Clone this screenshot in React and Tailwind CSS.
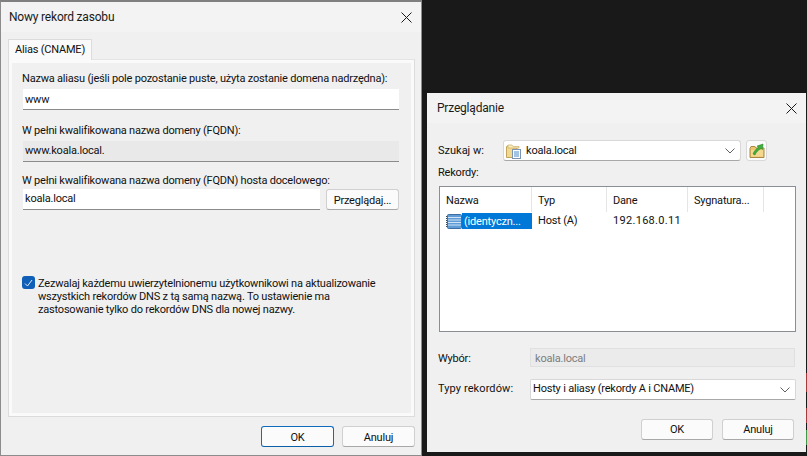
import React from 'react';

function CloseIcon() {
  return (
    <svg width="11" height="11" viewBox="0 0 11 11" className="block">
      <path d="M0.5 0.5 L10.5 10.5 M10.5 0.5 L0.5 10.5" stroke="#1a1a1a" strokeWidth="1" fill="none" />
    </svg>
  );
}

function Chevron() {
  return (
    <svg width="10" height="6" viewBox="0 0 10 6" className="block">
      <path d="M0.5 0.5 L5 5 L9.5 0.5" stroke="#606060" strokeWidth="1" fill="none" />
    </svg>
  );
}

function ZoneIcon() {
  return (
    <svg width="16" height="16" viewBox="0 0 16 16" className="block">
      <path d="M0.5 3.5 V14.5 H11 V5 H7 L5.5 3 H1 Z" fill="#f3d98f" stroke="#c2a45c" />
      <path d="M2 2 H6 L7 3.5 H13 V5 H2 Z" fill="#fbeebb" stroke="#c9ae6c" strokeWidth="0.7" />
      <rect x="6.5" y="6.5" width="8" height="9" fill="#fdfdff" stroke="#7d93b2" />
      <path d="M8 9 H13 M8 11 H13 M8 13 H13" stroke="#4b8ac6" strokeWidth="1" />
    </svg>
  );
}

function UpFolderIcon() {
  return (
    <svg width="16" height="16" viewBox="0 0 16 16" className="block">
      <path d="M1 5.5 V14.5 H15 V5 H7 L6 3.5 H2 Z" fill="#ecc66f" stroke="#a98a45" />
      <path d="M2 7 H14 V13.5 H2 Z" fill="#f4d88f" />
      <path d="M4 11 C5 8 7 6 9.5 4.5 L8 3 L14 1 L13.5 6.5 L12 5.5 C9.5 7 7 9 6 12 Z" fill="#3fae3a" stroke="#1f7f24" strokeWidth="0.5" />
    </svg>
  );
}

function RecordIcon() {
  return (
    <svg width="16" height="16" viewBox="0 0 16 16" className="block">
      <rect x="1.5" y="1.5" width="14" height="14" rx="1" fill="#5f9bd6" stroke="#3f6f9f" />
      <path d="M2 4.5 H15 M2 7 H15 M2 9.5 H15 M2 12 H15" stroke="#cfe3f5" strokeWidth="1" />
      <path d="M0.5 3 V14" stroke="#33475c" strokeWidth="1" strokeDasharray="1 1" />
    </svg>
  );
}

function Button({ label, primary, className }) {
  return (
    <button
      className={`h-[21px] w-[73px] pt-[1px] rounded-[3px] bg-[#fbfbfb] border text-[#111] leading-none ${
        primary ? 'border-[#0f6cbd] border-b-[#0b5ea8]' : 'border-[#d0d0d0] border-b-[#a8a8a8]'
      } ${className || ''}`}
    >
      {label}
    </button>
  );
}

function TitleBar({ title, pad }) {
  return (
    <div className={`h-[30px] shrink-0 bg-[#f3f3f3] flex items-center justify-between ${pad}`}>
      <span className="text-[12px] text-[#1a1a1a]">{title}</span>
      <CloseIcon />
    </div>
  );
}

function TextBox({ value, className }) {
  return (
    <div className={`h-[21px] bg-white border-b border-[#8b8b8b] pl-[2px] pt-[1px] flex items-center text-[#111] ${className}`}>
      {value}
    </div>
  );
}

function AliasDialog() {
  return (
    <div className="w-[422px] h-[456px] shrink-0 bg-[#f0f0f0] border-t-2 border-l border-r border-b border-[#8c8c8c] border-t-[#7f7f7f] flex flex-col">
      <TitleBar title="Nowy rekord zasobu" pad="pl-[8px] pr-[9px]" />
      <div className="h-[7px]" />
      <div className="h-[21px] w-[84px] ml-[7px] bg-[#fafafa] border border-b-0 border-[#dcdcdc] pl-[6px] flex items-center text-[#111] relative z-10 whitespace-nowrap">
        Alias (CNAME)
      </div>
      <div className="w-[407px] h-[358px] ml-[7px] -mt-[1px] border border-[#dcdcdc] border-t-[#e4e4e4]">
        <div className="h-full border-[3px] border-[#fafafa] pl-[10px] pr-[11px] pt-[6px] flex flex-col">
          <div className="leading-[16px] text-[#111] h-[16px] mt-[2px] whitespace-nowrap">
            Nazwa aliasu (jeśli pole pozostanie puste, użyta zostanie domena nadrzędna):
          </div>
          <TextBox value="www" className="w-[376px] ml-[1px] mt-[2px] !pt-[2px]" />
          <div className="leading-[16px] text-[#111] mt-[13px]">
            W pełni kwalifikowana nazwa domeny (FQDN):
          </div>
          <TextBox value="www.koala.local." className="w-[376px] ml-[1px] mt-[2px] !bg-[#e9e9e9]" />
          <div className="leading-[16px] text-[#111] mt-[11px]">
            W pełni kwalifikowana nazwa domeny (FQDN) hosta docelowego:
          </div>
          <div className="flex gap-[6px] ml-[1px]">
            <TextBox value="koala.local" className="w-[297px]" />
            <Button label="Przeglądaj..." />
          </div>
          <div className="flex mt-[65px]">
            <div className="w-[13px] h-[13px] mt-[1px] rounded-[3px] bg-[#0f5fb8] flex items-center justify-center shrink-0">
              <svg width="9" height="8" viewBox="0 0 9 8" className="block">
                <path d="M1 4.5 L3.5 7 L8 1" stroke="#dbe9f7" strokeWidth="1" fill="none" />
              </svg>
            </div>
            <div className="ml-[3px] pt-[2px] leading-[13px] text-[#111] whitespace-nowrap">
              <div>Zezwalaj każdemu uwierzytelnionemu użytkownikowi na aktualizowanie</div>
              <div>wszystkich rekordów DNS z tą samą nazwą. To ustawienie ma</div>
              <div>zastosowanie tylko do rekordów DNS dla nowej nazwy.</div>
            </div>
          </div>
        </div>
      </div>
      <div className="flex justify-end gap-[8px] pr-[6px] mt-[9px]">
        <Button label="OK" primary />
        <Button label="Anuluj" />
      </div>
    </div>
  );
}

const columns = [
  { name: 'Nazwa', width: 'w-[92px]' },
  { name: 'Typ', width: 'w-[75px]' },
  { name: 'Dane', width: 'w-[81px]' },
  { name: 'Sygnatura...', width: 'w-[76px]' },
];

function BrowseDialog() {
  return (
    <div className="w-[379px] h-[359px] mt-[93px] ml-[5px] shrink-0 bg-[#f0f0f0] flex flex-col text-[#111]">
      <TitleBar title="Przeglądanie" pad="pl-[10px] pr-[9px]" />
      <div className="pl-[11px] pr-[10px] flex flex-col">
        <div className="flex items-center mt-[17px]">
          <span className="w-[65px] mt-[1px] tracking-normal">Szukaj w:</span>
          <div className="w-[238px] h-[21px] pt-[1px] bg-white border border-[#d8d8d8] border-b-[#a8a8a8] rounded-[3px] flex items-center pl-[2px] pr-[5px]">
            <ZoneIcon />
            <span className="ml-[4px] flex-1">koala.local</span>
            <Chevron />
          </div>
          <div className="w-[21px] h-[21px] ml-[5px] bg-[#fbfbfb] border border-[#d8d8d8] rounded-[3px] flex items-center justify-center">
            <UpFolderIcon />
          </div>
        </div>
        <div className="mt-[4px] leading-[16px]">Rekordy:</div>
        <div className="w-[357px] h-[146px] mt-[5px] ml-[1px] bg-white border border-[#8a8f96]">
          <div className="flex h-[25px]">
            {columns.map((col) => (
              <div key={col.name} className={`${col.width} pl-[6px] pt-[3px] border-r border-[#e5e5e5] flex items-center`}>
                {col.name}
              </div>
            ))}
          </div>
          <div className="flex h-[17px] items-center">
            <div className="w-[92px] flex items-center pl-[6px]">
              <RecordIcon />
              <span className="w-[70px] h-[16px] pl-[2px] bg-[#0078d7] text-white leading-[18px] whitespace-nowrap">
                (identyczn...
              </span>
            </div>
            <div className="w-[75px] pl-[6px] pt-[2px]">Host (A)</div>
            <div className="w-[81px] pl-[6px] pt-[2px] tracking-[0.3px]">192.168.0.11</div>
          </div>
        </div>
        <div className="flex items-center mt-[16px]">
          <span className="w-[92px] mt-[3px]">Wybór:</span>
          <div className="w-[265px] h-[19px] pt-[2px] bg-[#ebebeb] border border-[#e0e0e0] pl-[4px] flex items-center text-[#7d7d7d]">
            koala.local
          </div>
        </div>
        <div className="flex items-center mt-[11px]">
          <span className="w-[92px] tracking-[0.1px]">Typy rekordów:</span>
          <div className="w-[266px] h-[21px] pt-[1px] bg-white border border-[#d8d8d8] border-b-[#a8a8a8] rounded-[2px] flex items-center justify-between pl-[2px] pr-[5px]">
            <span>Hosty i aliasy (rekordy A i CNAME)</span>
            <Chevron />
          </div>
        </div>
        <div className="flex justify-end gap-[9px] mt-[19px] pr-[2px]">
          <Button label="OK" className="!w-[72px]" />
          <Button label="Anuluj" className="!w-[72px]" />
        </div>
      </div>
    </div>
  );
}

// scraps of the desktop showing past the right edge of the second window
function EdgeStrip() {
  return (
    <div className="w-[1px] h-full flex flex-col shrink-0">
      <div className="h-[373px]" />
      <div className="h-[19px] bg-[#a63a3a]" />
      <div className="h-[16px]" />
      <div className="h-[15px] bg-[#a63a3a]" />
      <div className="h-[7px]" />
      <div className="h-[15px] bg-[#3f9a4a]" />
    </div>
  );
}

export default function App() {
  return (
    <div className="w-[807px] h-[456px] overflow-hidden bg-[#191919] flex text-[11px] tracking-[-0.2px] font-['Roboto',sans-serif]">
      <AliasDialog />
      <BrowseDialog />
      <EdgeStrip />
    </div>
  );
}
